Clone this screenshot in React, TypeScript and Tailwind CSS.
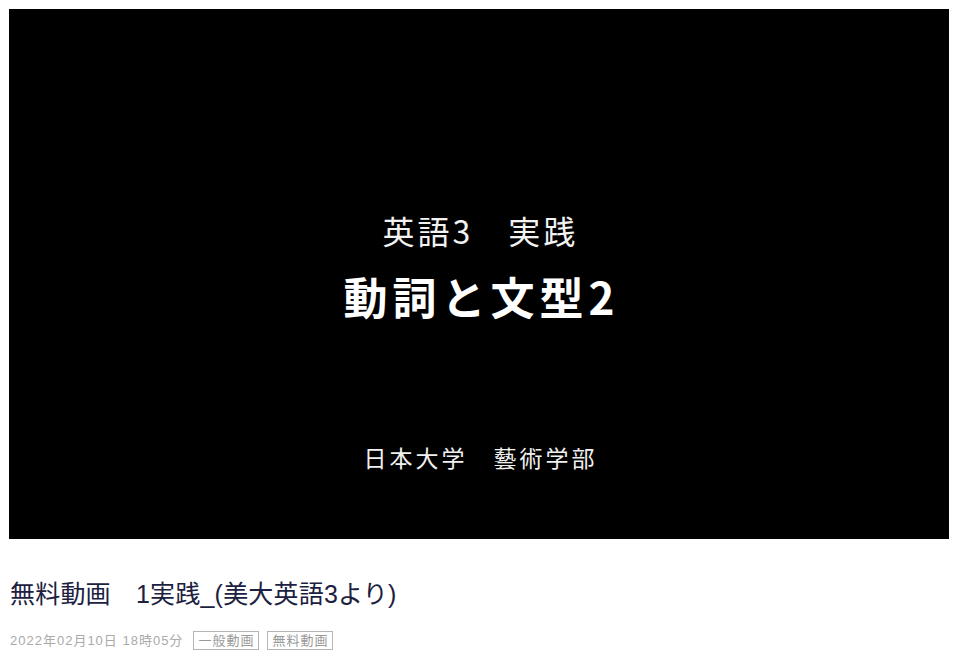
import React from "react";

export default function App() {
  const jp = { fontFamily: '"Noto Sans CJK JP", sans-serif' };
  return (
    <div className="min-h-[660px] bg-white p-[9px]" style={{ fontFamily: '"Liberation Sans", "Noto Sans CJK JP", sans-serif' }}>
      <div className="flex h-[530px] w-[940px] flex-col items-center bg-black text-white" style={jp}>
        <div className="mt-[202px] pl-[3px] text-[32px] leading-[38px] tracking-[3px] text-[#f2f2f2]">英語3　実践</div>
        <div className="mt-[20px] pl-[5px] text-[44px] font-bold leading-[54px] tracking-[5px] text-white">動詞と文型2</div>
        <div className="mt-[120px] pl-[3px] text-[23px] leading-[28px] tracking-[3px] text-[#f0f0f0]">日本大学　藝術学部</div>
      </div>
      <h1 className="mt-[38px] pl-px text-[25px] leading-[35px] tracking-[0.2px] text-[#1c2140]">無料動画　1実践_(美大英語3より)</h1>
      <div className="mt-[19px] flex items-center gap-[8px] pl-px text-[13px] leading-[15px] tracking-[1px] text-[#aaaaaa]">
        <span className="mr-[2px]">2022年02月10日 18時05分</span>
        <span className="border border-[#b5b5b5] px-[4px] py-[1px] text-[#999999]">一般動画</span>
        <span className="border border-[#b5b5b5] px-[4px] py-[1px] text-[#999999]">無料動画</span>
      </div>
    </div>
  );
}
